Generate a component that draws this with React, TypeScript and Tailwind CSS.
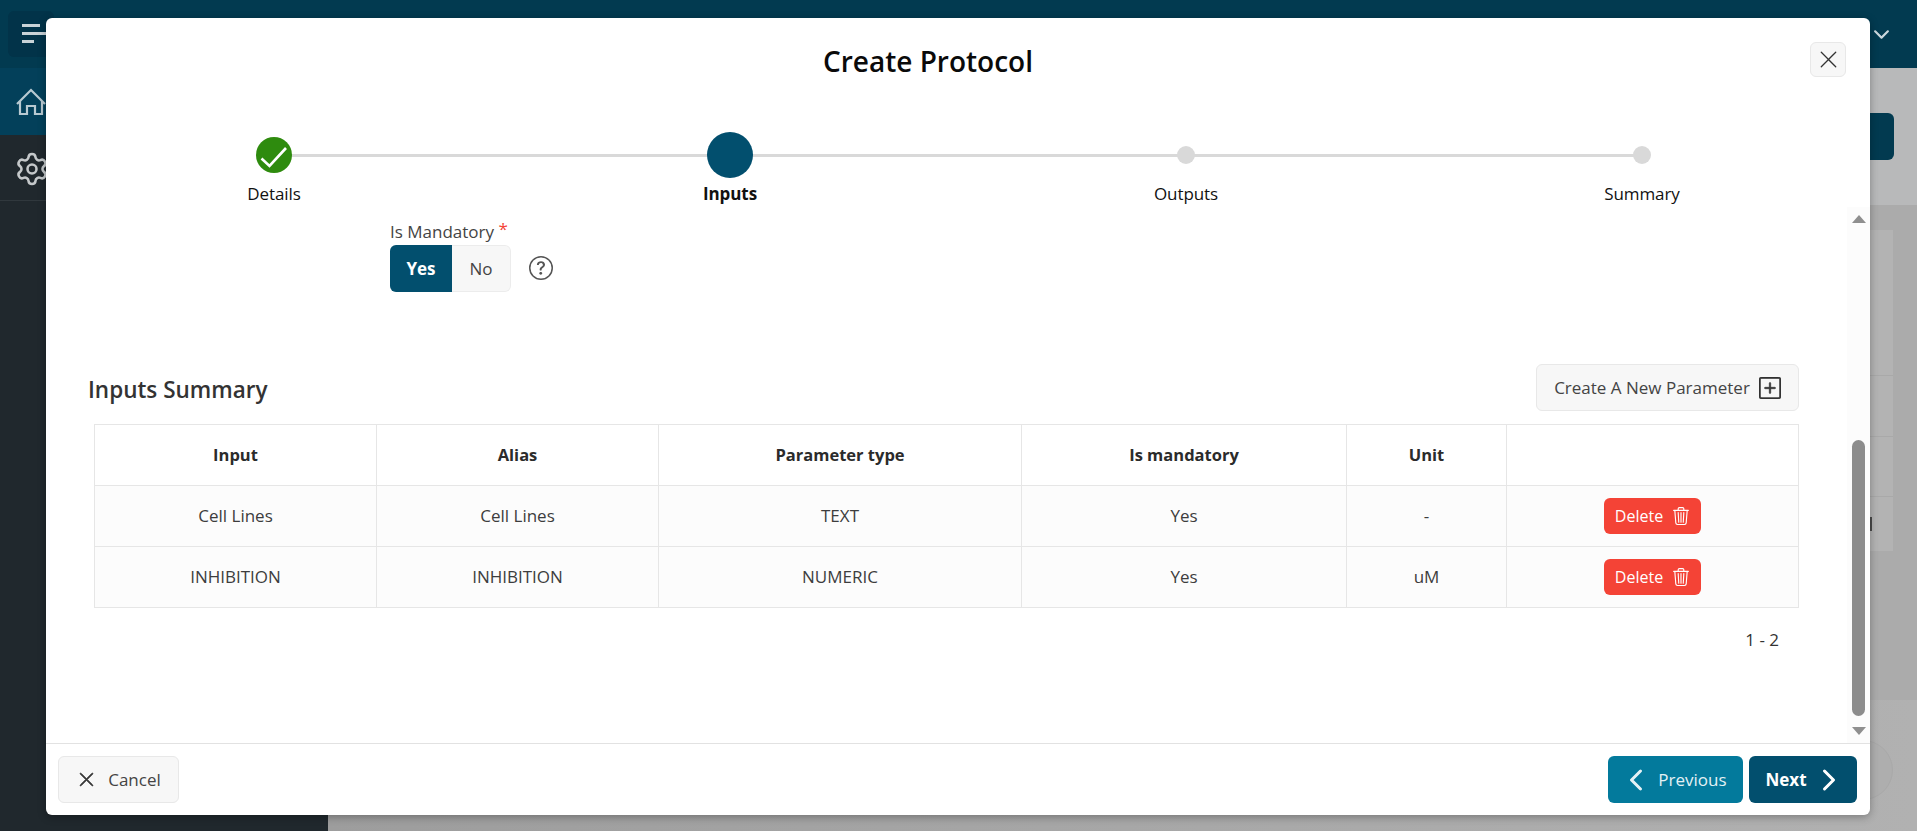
import React from "react";
import {
  BsChevronDown,
  BsChevronLeft,
  BsChevronRight,
  BsPlusSquare,
  BsQuestionCircle,
  BsTrash3,
  BsXLg,
} from "react-icons/bs";
import { Settings } from "lucide-react";

const FONT = "font-['Open_Sans','Noto_Sans',sans-serif]";

const steps = [
  { label: "Details", state: "done" },
  { label: "Inputs", state: "current" },
  { label: "Outputs", state: "todo" },
  { label: "Summary", state: "todo" },
];

const rows = [
  { input: "Cell Lines", alias: "Cell Lines", type: "TEXT", mandatory: "Yes", unit: "-" },
  { input: "INHIBITION", alias: "INHIBITION", type: "NUMERIC", mandatory: "Yes", unit: "uM" },
];

function Step({ label, state, last }: { label: string; state: string; last: boolean }) {
  return (
    <div className="relative flex flex-col items-center">
      {!last && <div className="absolute left-1/2 top-[21.5px] h-[3px] w-full bg-[#d9d9d9]" />}
      <div className="relative flex h-[46px] items-center justify-center">
        {state === "done" && (
          <div className="h-[36px] w-[36px] rounded-full bg-[#2e8b0e]">
            <svg width="36" height="36" viewBox="0 0 36 36" fill="none" stroke="#fff" strokeWidth="2.6">
              <path d="M5.5 21.5L13.5 29L30 11" />
            </svg>
          </div>
        )}
        {state === "current" && <div className="h-[46px] w-[46px] rounded-full bg-[#024f6e]" />}
        {state === "todo" && <div className="h-[18px] w-[18px] rounded-full bg-[#d9d9d9]" />}
      </div>
      <div
        className={`mt-[4px] text-[17px] leading-[24px] tracking-[-0.1px] text-[#111] ${state === "current" ? "font-bold" : "font-normal"}`}
      >
        {label}
      </div>
    </div>
  );
}

function Background() {
  return (
    <div className="flex h-full w-full flex-col">
      <header className="flex h-[68px] items-center justify-between bg-[#023a50] pl-[8px] pr-[27px]">
        <div className="flex h-[46px] w-[46px] items-center rounded-md bg-[#023349] pl-[14px]">
          <svg width="32" height="22" viewBox="0 0 32 22" fill="none" stroke="#c9d3d8" strokeWidth="3">
            <path d="M0 2.5H18" />
            <path d="M0 10.5H32" />
            <path d="M0 18.5H12" />
          </svg>
        </div>
        <BsChevronDown size={17} className="text-[#c9d6dc]" strokeWidth={1} />
      </header>
      <div className="flex flex-1">
        <aside className="w-[328px] bg-[#20282d]">
          <div className="flex h-[67px] items-center bg-[#03405a] pl-[16px]">
            <svg width="30" height="28" viewBox="0 0 30 28" fill="none" stroke="#b8c9d1" strokeWidth="2.2">
              <path d="M1 16L15 2L29 16" />
              <path d="M4 13V26H11V18H19V26H26V13" />
            </svg>
          </div>
          <div className="flex h-[66px] items-center border-b border-[#30383d] pl-[14px] pt-[2px] text-[#c4c8ca]">
            <Settings size={36} strokeWidth={1.7} />
          </div>
        </aside>
        <main className="relative flex flex-1 flex-col">
          <div className="flex h-[137px] items-center justify-end bg-[#b8b9ba] pr-[23px]">
            <div className="h-[47px] w-[160px] rounded-md bg-[#023a50]" />
          </div>
          <div className="flex h-[495px] flex-col bg-[#ababab] pr-[24px] pt-[25px]">
            <div className="flex h-[145px] flex-col bg-[#b3b3b3]" />
            <div className="h-[61px] border-t border-[#a9a9a9] bg-[#b3b3b3]" />
            <div className="h-[60px] border-t border-[#a9a9a9] bg-[#b3b3b3]" />
            <div className="flex h-[55px] items-center justify-end border-t border-[#a9a9a9] bg-[#b3b3b3] pr-[21px]">
              <div className="h-[14px] w-[2px] bg-[#4a4a4a]" />
            </div>
          </div>
          <div className="flex-1 bg-gradient-to-r from-[#9d9d9d] to-[#b1b1b1]" />
          <div className="absolute bottom-[31px] right-[24px] h-[60px] w-[60px] rounded-full border border-[#a9a9a9] bg-[#aeaeae]" />
        </main>
      </div>
    </div>
  );
}

function Scrollbar() {
  return (
    <div className="absolute bottom-0 right-0 top-0 flex w-[23px] flex-col items-center bg-[#fcfcfc]">
      <svg className="mt-[8px]" width="14" height="8" viewBox="0 0 14 8" fill="#8f8f8f">
        <path d="M7 0L14 8H0Z" />
      </svg>
      <div className="mt-[217px] h-[276px] w-[13px] rounded-full bg-[#8c8c8c]" />
      <svg className="mt-[11px]" width="14" height="8" viewBox="0 0 14 8" fill="#8f8f8f">
        <path d="M0 0H14L7 8Z" />
      </svg>
    </div>
  );
}

function SummaryTable() {
  const th = "border border-[#e6e6e6] text-center text-[16.5px] font-bold text-[#2b2b2b]";
  const td = "border border-[#e6e6e6] text-center text-[17px] font-normal text-[#3d3d3d]";
  return (
    <table className="ml-[6px] mt-[13px] w-[1704px] table-fixed border-collapse">
      <colgroup>
        <col className="w-[282px]" />
        <col className="w-[282px]" />
        <col className="w-[363px]" />
        <col className="w-[325px]" />
        <col className="w-[160px]" />
        <col className="w-[292px]" />
      </colgroup>
      <thead>
        <tr className="h-[61px] bg-white">
          <th className={th}>Input</th>
          <th className={th}>Alias</th>
          <th className={th}>Parameter type</th>
          <th className={th}>Is mandatory</th>
          <th className={th}>Unit</th>
          <th className={th}></th>
        </tr>
      </thead>
      <tbody>
        {rows.map((r) => (
          <tr key={r.input} className="h-[61px] bg-[#fcfcfc]">
            <td className={td}>{r.input}</td>
            <td className={td}>{r.alias}</td>
            <td className={td}>{r.type}</td>
            <td className={td}>{r.mandatory}</td>
            <td className={td}>{r.unit}</td>
            <td className={td}>
              <div className="flex justify-center">
                <button className="flex h-[36px] w-[97px] items-center justify-center gap-[9px] rounded-md bg-[#f44336] text-[16px] text-white">
                  Delete
                  <BsTrash3 size={18} />
                </button>
              </div>
            </td>
          </tr>
        ))}
      </tbody>
    </table>
  );
}

export default function App() {
  return (
    <div className={`relative h-screen w-full overflow-hidden ${FONT}`}>
      <Background />
      <div className="absolute left-[46px] top-[18px] flex h-[797px] w-[1824px] flex-col rounded-md bg-white shadow-[0_2px_8px_rgba(0,0,0,0.3)]">
        <div className="flex h-[86px] shrink-0 items-center justify-center pr-[60px]">
          <h1 className="text-[28px] font-semibold leading-none text-[#0a0a0a]">Create Protocol</h1>
        </div>
        <button className="absolute right-[24px] top-[24px] flex h-[35px] w-[36px] items-center justify-center rounded-md border border-[#e8e8e8] bg-[#f7f7f7] text-[#333]">
          <BsXLg size={21} />
        </button>

        <div className="grid h-[103px] shrink-0 grid-cols-4 pt-[28px]">
          {steps.map((s, i) => (
            <Step key={s.label} label={s.label} state={s.state} last={i === steps.length - 1} />
          ))}
        </div>

        <div className="relative min-h-0 flex-1 overflow-hidden pl-[42px] pr-[71px]">
          <div className="ml-[302px] pt-[13px]">
            <div className="text-[17px] leading-[24px] text-[#444]">
              Is Mandatory <span className="relative -top-[3px] text-[#f44336]">*</span>
            </div>
            <div className="mt-[1px] flex items-center">
              <div className="flex h-[47px] w-[121px] overflow-hidden rounded-md bg-[#f7f7f7]">
                <div className="flex w-[62px] items-center justify-center bg-[#024f6e] text-[17px] font-bold text-white">
                  Yes
                </div>
                <div className="flex flex-1 items-center justify-center rounded-r-md border border-l-0 border-[#ececec] text-[17px] text-[#444]">
                  No
                </div>
              </div>
              <BsQuestionCircle size={24} className="-mt-[2px] ml-[18px] text-[#555]" />
            </div>
          </div>

          <div className="mt-[72px] flex items-center justify-between">
            <h2 className="pt-[4px] text-[22.5px] font-semibold leading-[30px] text-[#333]">Inputs Summary</h2>
            <button className="flex h-[47px] w-[263px] items-center justify-center gap-[9px] rounded-md border border-[#e8e8e8] bg-[#f7f7f7] pt-[1px] text-[17px] text-[#444]">
              Create A New Parameter
              <BsPlusSquare size={22} strokeWidth={0.5} className="text-[#333]" />
            </button>
          </div>

          <SummaryTable />

          <div className="mt-[20px] pr-[20px] text-right text-[17px] leading-[24px] text-[#333]">1 - 2</div>

          <Scrollbar />
        </div>

        <footer className="flex h-[72px] shrink-0 items-center justify-between border-t border-[#e2e2e2] pl-[12px] pr-[13px]">
          <button className="flex h-[47px] w-[121px] items-center justify-center gap-[13px] rounded-md border border-[#e8e8e8] bg-[#f7f7f7] pl-[2px] text-[17px] text-[#444]">
            <BsXLg size={17} strokeWidth={0.8} className="text-[#333]" />
            Cancel
          </button>
          <div className="flex gap-[6px]">
            <button className="flex h-[47px] w-[135px] items-center justify-center gap-[10px] rounded-md bg-[#037a9c] text-[17px] text-[#e4f1f5]">
              <BsChevronLeft size={24} strokeWidth={1} />
              Previous
            </button>
            <button className="flex h-[47px] w-[108px] items-center justify-center gap-[10px] rounded-md bg-[#024f6e] text-[17px] font-bold text-white">
              Next
              <BsChevronRight size={24} strokeWidth={1} />
            </button>
          </div>
        </footer>
      </div>
    </div>
  );
}
